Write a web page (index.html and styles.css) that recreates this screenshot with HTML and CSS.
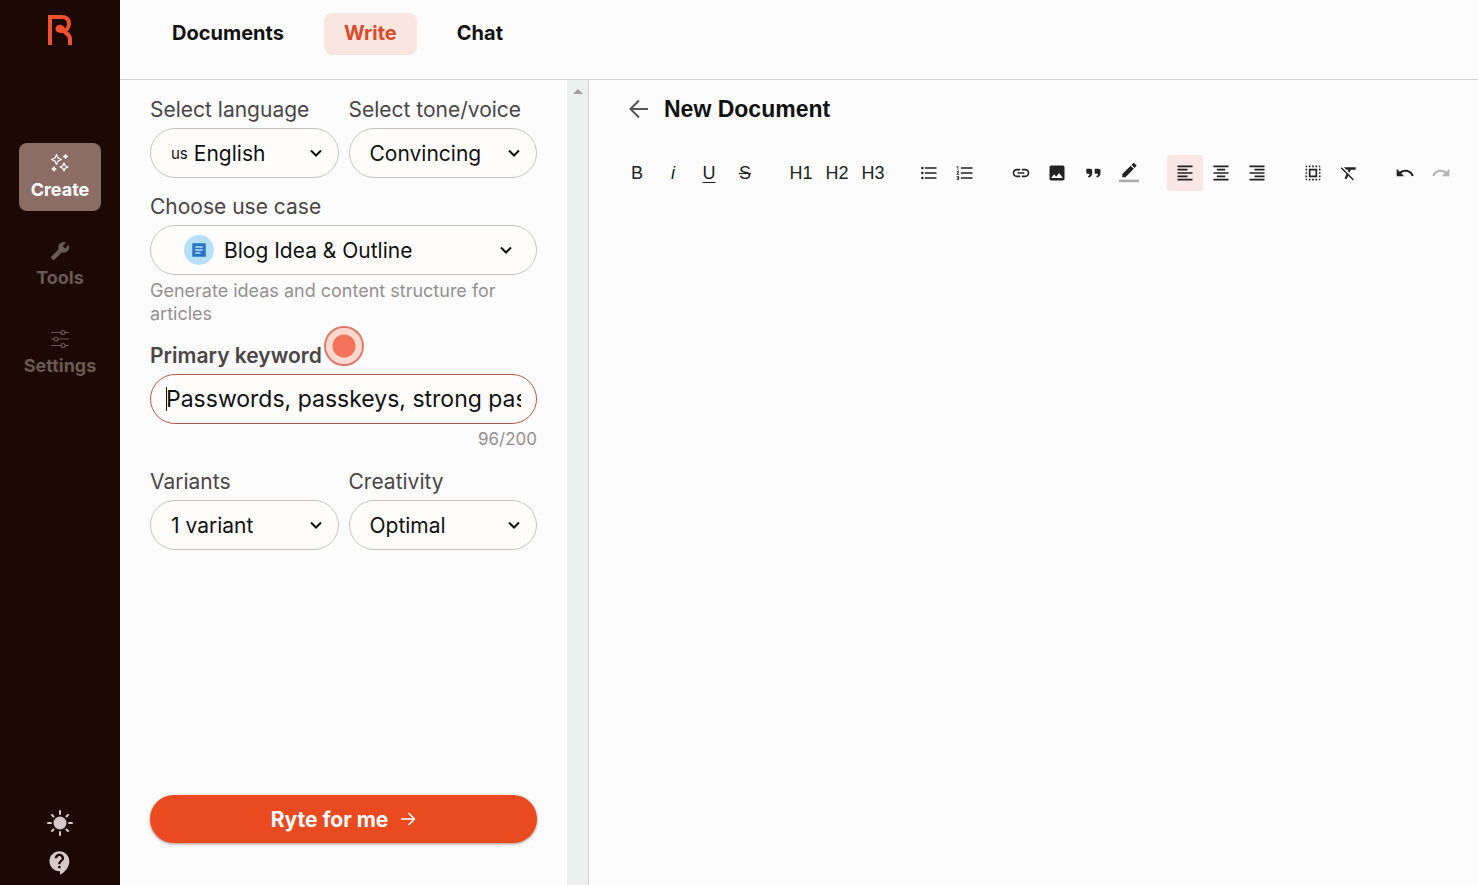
FILE: index.html
```html
<!DOCTYPE html>
<html lang="en">
<head>
<meta charset="utf-8">
<meta name="viewport" content="width=device-width, initial-scale=1">
<title>New Document</title>
<link rel="stylesheet" href="styles.css">
</head>
<body>

<div class="app">
    <aside class="rail">
        <a href="#" class="logo" aria-label="Home">
            <svg width="24" height="30" viewBox="0 0 24 30" fill="none" stroke="#f0512f" stroke-width="4">
                <path d="M2 30V2h12c4.500 0 7 2.500 7 6.500 0 5-3 7.500-7 7.500-3 0-4.500-1-4.500-2.500S11 11.500 13 12c2 .5 2.500 3 4 5s5 3 5 7v6"/>
            </svg>
        </a>
        <nav class="rail-nav">
            <a href="#" class="rail-item active">
                <svg width="20" height="20" viewBox="0 0 20 20" fill="none" stroke="currentColor" stroke-width="1.2" stroke-linejoin="round">
                    <path d="M6.5 1.500L8 5l3.500 1.500L8 8l-1.500 3.500L5 8 1.500 6.500 5 5zM14 10l1.200 2.800L18 14l-2.800 1.200L14 18l-1.200-2.800L10 14l2.800-1.200zM4 14l.7 1.300L6 16l-1.300.7L4 18l-.7-1.300L2 16l1.300-.7zM15.500 1.500l.6 1.400 1.400.6-1.400.6-.6 1.400-.6-1.400-1.400-.6 1.400-.6z"/>
                </svg>
                <span>Create</span>
            </a>
            <a href="#" class="rail-item">
                <svg width="20" height="20" viewBox="0 0 24 24" fill="currentColor">
                    <path d="M1.300 19l9.100-9.100c-.9-2.300-.4-5 1.500-6.900 2-2 5-2.400 7.400-1.300L15 6l3 3 4.400-4.300c1.200 2.400.7 5.400-1.300 7.400-1.900 1.900-4.600 2.400-6.900 1.500l-9.100 9.100c-.4.4-1 .4-1.400 0l-2.300-2.300c-.5-.4-.5-1.100-.1-1.400z"/>
                </svg>
                <span>Tools</span>
            </a>
            <a href="#" class="rail-item">
                <svg width="20" height="20" viewBox="0 0 20 20" fill="none" stroke="currentColor" stroke-width="1.2">
                    <path d="M1 3.500h10M15 3.500h4M1 10h3M8 10h11M1 16.500h10M15 16.500h4"/>
                    <circle cx="13" cy="3.500" r="2"/><circle cx="6" cy="10" r="2"/><circle cx="13" cy="16.500" r="2"/>
                </svg>
                <span>Settings</span>
            </a>
        </nav>
        <div class="rail-bottom">
            <button type="button" aria-label="Theme">
                <svg width="28" height="28" viewBox="0 0 28 28" fill="currentColor">
                    <circle cx="14" cy="14" r="6.500"/>
                    <path d="M14 2v3M14 23v3M2 14h3M23 14h3M6 6l1.500 1.500M20.500 20.500L22 22M6 22l1.500-1.500M20.500 7.500L22 6" stroke="currentColor" stroke-width="2" stroke-linecap="round"/>
                </svg>
            </button>
            <button type="button" aria-label="Help">
                <svg width="28" height="28" viewBox="0 0 24 24" fill="currentColor">
                    <path d="M11.500 2C6.810 2 3 5.810 3 10.500S6.810 19 11.500 19h.5v3c4.860-2.340 8-7 8-11.500C20 5.810 16.190 2 11.500 2zm1 14.500h-2v-2h2v2zm0-3.500h-2c0-3.250 3-3 3-5 0-1.100-.9-2-2-2s-2 .9-2 2h-2c0-2.210 1.790-4 4-4s4 1.790 4 4c0 2.500-3 2.750-3 5z"/>
                </svg>
            </button>
        </div>
    </aside>

    <div class="page">
        <header class="tabs">
            <a href="#">Documents</a>
            <a href="#" class="active">Write</a>
            <a href="#">Chat</a>
        </header>

        <main class="workspace">
            <form class="panel">
                <div class="row">
                    <div class="field">
                        <label for="language">Select language</label>
                        <div class="control">
                            <span class="flag">us</span>
                            <select id="language"><option>English</option></select>
                            <svg class="chevron" width="12" height="8" viewBox="0 0 12 8"><path d="M1 1.500l5 5 5-5"/></svg>
                        </div>
                    </div>
                    <div class="field">
                        <label for="tone">Select tone/voice</label>
                        <div class="control">
                            <select id="tone"><option>Convincing</option></select>
                            <svg class="chevron" width="12" height="8" viewBox="0 0 12 8"><path d="M1 1.500l5 5 5-5"/></svg>
                        </div>
                    </div>
                </div>

                <div class="field">
                    <label for="usecase">Choose use case</label>
                    <div class="control wide">
                        <span class="case-icon">
                            <svg width="18" height="18" viewBox="0 0 24 24" fill="#2b73c4"><path d="M21 3H3v18h18V3zM14 17H7v-2h7v2zm3-4H7v-2h10v2zm0-4H7V7h10v2z"/></svg>
                        </span>
                        <select id="usecase"><option>Blog Idea &amp; Outline</option></select>
                        <svg class="chevron" width="12" height="8" viewBox="0 0 12 8"><path d="M1 1.500l5 5 5-5"/></svg>
                    </div>
                    <p class="hint">Generate ideas and content structure for articles</p>
                </div>

                <div class="field">
                    <label for="keyword" class="strong">Primary keyword<span class="pulse"></span></label>
                    <div class="control focused">
                        <input type="text" id="keyword" value="Passwords, passkeys, strong passwords">
                    </div>
                    <p class="hint count">96/200</p>
                </div>

                <div class="row">
                    <div class="field">
                        <label for="variants">Variants</label>
                        <div class="control">
                            <select id="variants"><option>1 variant</option></select>
                            <svg class="chevron" width="12" height="8" viewBox="0 0 12 8"><path d="M1 1.500l5 5 5-5"/></svg>
                        </div>
                    </div>
                    <div class="field">
                        <label for="creativity">Creativity</label>
                        <div class="control">
                            <select id="creativity"><option>Optimal</option></select>
                            <svg class="chevron" width="12" height="8" viewBox="0 0 12 8"><path d="M1 1.500l5 5 5-5"/></svg>
                        </div>
                    </div>
                </div>

                <button type="submit" class="submit">
                    Ryte for me
                    <svg width="16" height="16" viewBox="0 0 16 16" fill="none" stroke="#fff" stroke-width="1.5"><path d="M1 8h13M8.500 2l6 6-6 6"/></svg>
                </button>
            </form>
            <div class="scroller"></div>

            <section class="editor">
                <div class="title">
                    <button type="button" aria-label="Back">
                        <svg width="20" height="20" viewBox="0 0 20 20" fill="none" stroke="#555" stroke-width="2"><path d="M19 10H2M10 1.500L1.500 10l8.500 8.500"/></svg>
                    </button>
                    <h1>New Document</h1>
                </div>
                <div class="toolbar">
                    <div class="group">
                        <button type="button">B</button>
                        <button type="button"><i>i</i></button>
                        <button type="button"><u>U</u></button>
                        <button type="button"><s>S</s></button>
                    </div>
                    <div class="group">
                        <button type="button">H1</button>
                        <button type="button">H2</button>
                        <button type="button">H3</button>
                    </div>
                    <div class="group">
                        <button type="button" aria-label="Bulleted list"><svg viewBox="0 0 24 24"><path d="M4 10.500a1.500 1.500 0 1 0 0 3 1.500 1.500 0 0 0 0-3zm0-6a1.500 1.500 0 1 0 0 3 1.500 1.500 0 0 0 0-3zm0 12a1.500 1.500 0 1 0 0 3 1.500 1.500 0 0 0 0-3zM7 19h14v-2H7v2zm0-6h14v-2H7v2zm0-8v2h14V5H7z"/></svg></button>
                        <button type="button" aria-label="Numbered list"><svg viewBox="0 0 24 24"><path d="M2 17h2v.5H3v1h1v.5H2v1h3v-4H2v1zm1-9h1V4H2v1h1v3zm-1 3h1.800L2 13.100v.9h3v-1H3.200L5 10.900V10H2v1zm5-6v2h14V5H7zm0 14h14v-2H7v2zm0-6h14v-2H7v2z"/></svg></button>
                    </div>
                    <div class="group">
                        <button type="button" aria-label="Link"><svg viewBox="0 0 24 24"><path d="M3.900 12c0-1.710 1.390-3.100 3.100-3.100h4V7H7c-2.760 0-5 2.240-5 5s2.240 5 5 5h4v-1.900H7c-1.710 0-3.100-1.390-3.100-3.100zM8 13h8v-2H8v2zm9-6h-4v1.900h4c1.710 0 3.100 1.390 3.100 3.100s-1.390 3.100-3.100 3.100h-4V17h4c2.760 0 5-2.240 5-5s-2.240-5-5-5z"/></svg></button>
                        <button type="button" aria-label="Image"><svg viewBox="0 0 24 24"><path d="M21 19V5c0-1.100-.9-2-2-2H5c-1.100 0-2 .9-2 2v14c0 1.100.9 2 2 2h14c1.100 0 2-.9 2-2zM8.500 13.500l2.500 3.010L14.500 12l4.500 6H5l3.500-4.500z"/></svg></button>
                        <button type="button" aria-label="Quote"><svg viewBox="0 0 24 24"><path d="M4 7h5c1 0 2 1 2 2v3c0 3-1.500 5-4.500 5.500L6 16c1.500-.6 2-1.500 2-3H5.500C4.500 13 4 12.500 4 11.500zM14 7h5c1 0 2 1 2 2v3c0 3-1.500 5-4.500 5.500L16 16c1.500-.6 2-1.500 2-3h-2.500c-1 0-1.500-.5-1.500-1.500z"/></svg></button>
                        <button type="button" aria-label="Text colour"><svg viewBox="0 0 24 24"><path d="M17.750 7L14 3.250l-10 10V17h3.750l10-10zm2.960-2.960c.39-.39.39-1.020 0-1.410L18.370.29c-.39-.39-1.020-.39-1.410 0L15 2.250 18.750 6l1.960-1.960z"/><path d="M0 20h24v3H0z" fill="#aaa"/></svg></button>
                    </div>
                    <div class="group">
                        <button type="button" class="active" aria-label="Align left"><svg viewBox="0 0 24 24"><path d="M15 15H3v2h12v-2zm0-8H3v2h12V7zM3 13h18v-2H3v2zm0 8h18v-2H3v2zM3 3v2h18V3H3z"/></svg></button>
                        <button type="button" aria-label="Align centre"><svg viewBox="0 0 24 24"><path d="M7 15v2h10v-2H7zm-4 6h18v-2H3v2zm0-8h18v-2H3v2zm4-6v2h10V7H7zM3 3v2h18V3H3z"/></svg></button>
                        <button type="button" aria-label="Align right"><svg viewBox="0 0 24 24"><path d="M3 21h18v-2H3v2zm6-4h12v-2H9v2zm-6-4h18v-2H3v2zm6-4h12V7H9v2zM3 3v2h18V3H3z"/></svg></button>
                    </div>
                    <div class="group">
                        <button type="button" aria-label="Select all"><svg viewBox="0 0 24 24"><path d="M3 5h2V3c-1.100 0-2 .9-2 2zm0 8h2v-2H3v2zm4 8h2v-2H7v2zM3 9h2V7H3v2zm10-6h-2v2h2V3zm6 0v2h2c0-1.100-.9-2-2-2zM5 21v-2H3c0 1.100.9 2 2 2zm-2-4h2v-2H3v2zM9 3H7v2h2V3zm2 18h2v-2h-2v2zm8-8h2v-2h-2v2zm0 8c1.100 0 2-.9 2-2h-2v2zm0-12h2V7h-2v2zm0 8h2v-2h-2v2zm-4 4h2v-2h-2v2zm0-16h2V3h-2v2zM7 17h10V7H7v10zm2-8h6v6H9V9z"/></svg></button>
                        <button type="button" aria-label="Clear formatting"><svg viewBox="0 0 24 24"><path d="M3.270 5L2 6.270l6.970 6.970L6.500 19h3l1.570-3.660L16.730 21 18 19.730 3.550 5.270 3.270 5zM6 5v.18L8.820 8h2.400l-.72 1.680 2.100 2.100L14.210 8H20V5H6z"/></svg></button>
                    </div>
                    <div class="group">
                        <button type="button" aria-label="Undo"><svg viewBox="0 0 24 24"><path d="M12.500 8c-2.650 0-5.050.99-6.900 2.600L2 7v9h9l-3.620-3.620c1.390-1.160 3.160-1.880 5.120-1.880 3.540 0 6.550 2.310 7.600 5.500l2.370-.78C21.080 11.030 17.150 8 12.500 8z"/></svg></button>
                        <button type="button" disabled aria-label="Redo"><svg viewBox="0 0 24 24"><path d="M18.400 10.600C16.550 8.990 14.150 8 11.500 8c-4.650 0-8.580 3.030-9.960 7.220L3.900 16c1.050-3.190 4.050-5.500 7.600-5.500 1.950 0 3.730.72 5.120 1.880L13 16h9V7l-3.600 3.600z"/></svg></button>
                    </div>
                </div>
            </section>
        </main>
    </div>
</div>

</body>
</html>
```

FILE: styles.css
```css
* {
  box-sizing: border-box;
}

body {
  margin: 0;
  background: #fcfcfc;
  color: #111;
  font-family: Inter, "Open Sans", sans-serif;
  font-size: 21px;
}

a {
  color: inherit;
  text-decoration: none;
}

button {
  padding: 0;
  border: 0;
  background: none;
  color: inherit;
  font: inherit;
}

svg {
  display: block;
  flex: none;
}

.app {
  display: flex;
  min-height: 100vh;
}

/* Dark bar on the left */
.rail {
  flex: none;
  width: 120px;
  padding: 15px 0 8px;
  display: flex;
  flex-direction: column;
  align-items: center;
  background: #1d0903;
  color: #685a55;
}

.rail-nav {
  display: flex;
  flex-direction: column;
  align-items: center;
  gap: 20px;
  margin-top: 98px;
}

.rail-item {
  width: 82px;
  height: 68px;
  display: flex;
  flex-direction: column;
  align-items: center;
  justify-content: center;
  gap: 6px;
  border-radius: 8px;
  font-size: 18px;
  font-weight: 700;
  line-height: 22px;
}

.rail-item.active {
  background: #8b6d66;
  color: #fff;
}

.rail-bottom {
  display: flex;
  flex-direction: column;
  gap: 12px;
  margin-top: auto;
  color: #d5cac8;
}

.page {
  flex: 1;
  min-width: 0;
  display: flex;
  flex-direction: column;
}

/* Top tabs */
.tabs {
  height: 80px;
  padding: 13px 32px;
  display: flex;
  align-items: flex-start;
  gap: 20px;
  border-bottom: 1px solid #d6d1d1;
  font-size: 20px;
  font-weight: 700;
  line-height: 40px;
}

.tabs a {
  height: 42px;
  padding: 0 20px;
  border-radius: 8px;
}

.tabs .active {
  background: #f9e6e0;
  color: #dc4a2b;
}

.workspace {
  flex: 1;
  display: flex;
}

/* Form on the left */
.panel {
  flex: none;
  width: 447px;
  padding: 17px 30px 42px;
  display: flex;
  flex-direction: column;
  gap: 16px;
}

.row {
  display: flex;
  gap: 10px;
}

.row .field {
  flex: 1;
  min-width: 0;
}

label {
  position: relative;
  display: inline-block;
  margin-bottom: 5px;
  color: #4a4646;
  line-height: 26px;
  vertical-align: top;
}

.strong {
  font-weight: 600;
}

.control {
  position: relative;
  height: 50px;
  padding: 0 16px 0 20px;
  display: flex;
  align-items: center;
  border: 1px solid #c9c4c4;
  border-radius: 25px;
  background: #fefdfc;
}

.control.wide {
  padding: 0 24px 0 33px;
}

.control.focused {
  padding: 0 15px;
  border-color: #b4574a;
}

select,
input {
  flex: 1;
  min-width: 0;
  height: 100%;
  padding: 0;
  border: 0;
  outline: 0;
  appearance: none;
  background: none;
  color: #111;
  font: inherit;
}

input {
  font-size: 23px;
}

/* Text cursor at the start of the field */
.focused::before {
  content: "";
  position: absolute;
  top: 12px;
  left: 15px;
  width: 1px;
  height: 24px;
  background: #111;
}

.flag {
  margin-right: 6px;
  font-size: 15px;
}

.chevron {
  fill: none;
  stroke: #111;
  stroke-width: 2;
  pointer-events: none;
}

.case-icon {
  width: 30px;
  height: 30px;
  margin-right: 10px;
  display: flex;
  align-items: center;
  justify-content: center;
  border-radius: 50%;
  background: #b5e1f8;
}

.hint {
  margin: 4px 0 2px;
  color: #949090;
  font-size: 18px;
  line-height: 23px;
}

.count {
  font-size: 17px;
  text-align: right;
}

/* Hotspot beside the keyword label */
.pulse {
  position: absolute;
  top: -17px;
  left: 100%;
  width: 40px;
  height: 40px;
  margin-left: 2px;
  border: 2px solid #e0796a;
  border-radius: 50%;
  background: radial-gradient(circle, #f4735a 11px, #fcd8cf 12px);
}

.submit {
  height: 48px;
  margin-top: auto;
  display: flex;
  align-items: center;
  justify-content: center;
  gap: 12px;
  border-radius: 24px;
  background: #ea4a20;
  box-shadow: 0 1px 3px rgba(90, 30, 10, 0.5);
  color: #fff;
  font-weight: 700;
}

.scroller {
  flex: none;
  width: 22px;
  padding-top: 9px;
  border-right: 1px solid #ddd2d2;
  background: #eef0f0;
}

.scroller::before {
  content: "";
  display: block;
  width: 0;
  margin: 0 auto;
  border: 5px solid transparent;
  border-top: 0;
  border-bottom-color: #a09c9c;
}

/* Document editor */
.editor {
  flex: 1;
  min-width: 0;
  padding: 14px 0 0 30px;
  font-family: "Liberation Sans", Arial, sans-serif;
}

.title {
  display: flex;
  align-items: center;
  gap: 15px;
  padding-left: 10px;
}

h1 {
  margin: 0;
  font-size: 23px;
  line-height: 30px;
}

.toolbar {
  display: flex;
  flex-wrap: wrap;
  gap: 20px;
  margin-top: 31px;
  color: #222;
  font-size: 18px;
}

.group {
  display: flex;
}

.group button {
  width: 36px;
  height: 36px;
  display: flex;
  align-items: center;
  justify-content: center;
  border-radius: 3px;
}

.group svg {
  width: 20px;
  height: 20px;
  fill: currentColor;
}

.group u {
  text-underline-offset: 3px;
}

.group .active {
  background: #f8e7e5;
}

.group button:disabled {
  color: #b5b3b3;
}
```
